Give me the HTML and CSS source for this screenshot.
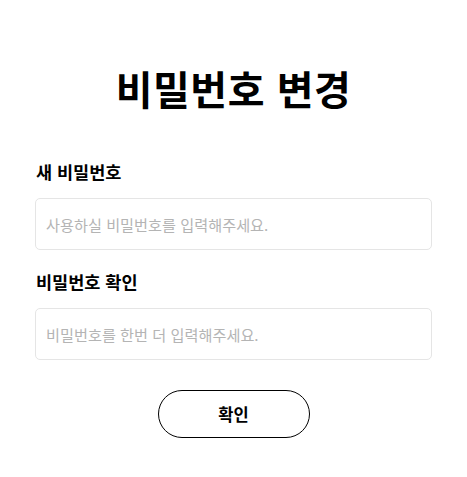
FILE: index.html
```html
<!DOCTYPE html>
<html lang="ko">
<head>
<meta charset="utf-8">
<link rel="stylesheet" href="styles.css">
</head>
<body>
<main class="page">
  <h1 class="title">비밀번호 변경</h1>
  <form class="form">
    <div class="field">
      <label class="label" for="pw">새 비밀번호</label>
      <input class="input" id="pw" type="password" placeholder="사용하실 비밀번호를 입력해주세요.">
    </div>
    <div class="field">
      <label class="label" for="pw2">비밀번호 확인</label>
      <input class="input" id="pw2" type="password" placeholder="비밀번호를 한번 더 입력해주세요.">
    </div>
    <div class="actions">
      <button class="btn" type="button">확인</button>
    </div>
  </form>
</main>
</body>
</html>
```
FILE: styles.css
```css
* { box-sizing: border-box; }
html, body { margin: 0; padding: 0; background: #fff; }
body {
  font-family: "Noto Sans CJK KR", "Noto Sans", sans-serif;
  color: #000;
}
.page {
  padding: 58px 35px 0;
}
.title {
  margin: 0;
  text-align: center;
  font-size: 40px;
  font-weight: 700;
  line-height: 60px;
  letter-spacing: 0.5px;
}
.form {
  margin-top: 42px;
  display: flex;
  flex-direction: column;
}
.field {
  display: flex;
  flex-direction: column;
  margin-bottom: 20px;
}
.label {
  font-size: 17.5px;
  font-weight: 700;
  line-height: 24px;
  margin-bottom: 14px;
  padding-left: 1px;
}
.input {
  width: 100%;
  height: 52px;
  border: 1px solid #e5e5e5;
  border-radius: 5px;
  padding: 0 10px;
  font-family: inherit;
  font-size: 15.2px;
  outline: none;
}
.input::placeholder { color: #b4b4b4; }
.actions {
  display: flex;
  justify-content: center;
  margin-top: 10px;
}
.btn {
  width: 152px;
  height: 48px;
  border: 1px solid #000;
  border-radius: 24px;
  background: #fff;
  font-family: inherit;
  font-size: 16.5px;
  font-weight: 700;
  color: #000;
}
```
